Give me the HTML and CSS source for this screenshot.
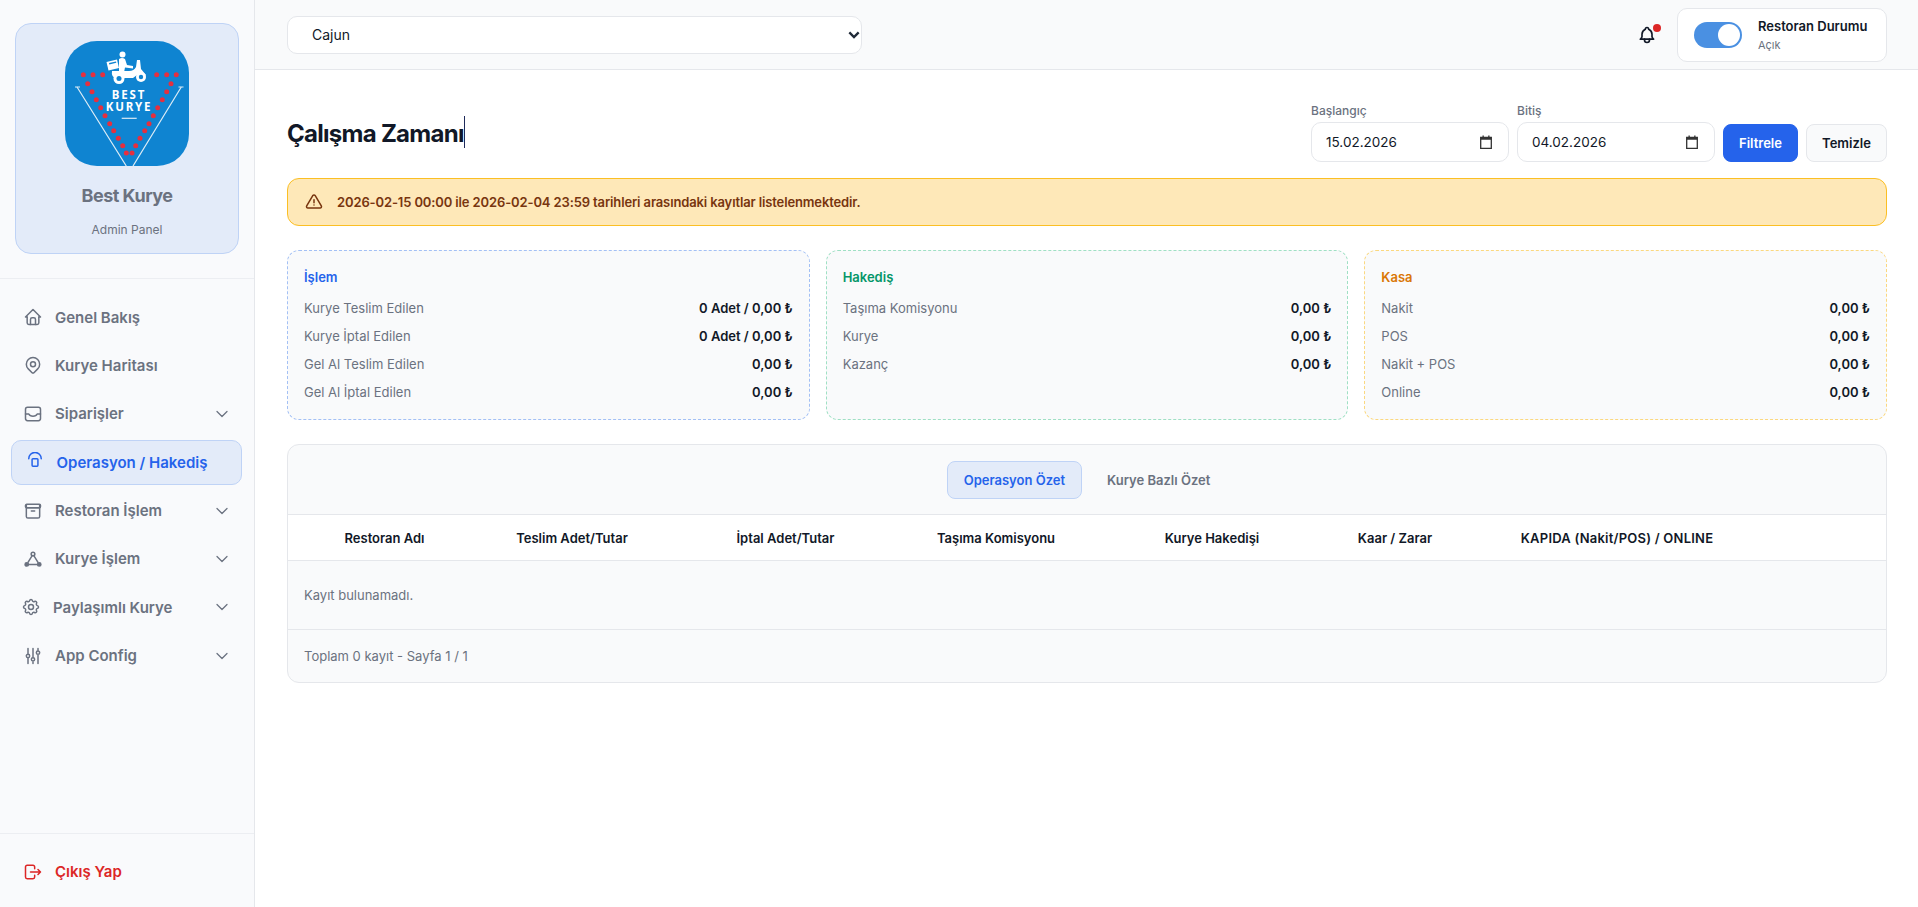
FILE: index.html
```html
<!DOCTYPE html>
<html lang="tr">

<head>
    <meta charset="UTF-8">
    <title>Best Kurye</title>
    <link rel="stylesheet" href="styles.css">
</head>

<body>
    <aside class="sidebar">
        <div class="brand-wrap">
            <div class="brand">
                <svg class="logo" viewBox="0 0 124 125">
                    <rect width="124" height="125" rx="32" fill="#0f84d1" />
                    <g fill="none" stroke="#dcecf6" stroke-width="1.2">
                        <path d="M12 46L61.3 125M116.3 46L68 125" />
                        <path d="M10 46h5M113.500 46h5" />
                    </g>
                    <g fill="#e5303f">
                        <circle cx="18.300" cy="33.700" r="2.500" />
                        <circle cx="28" cy="33.700" r="2.500" />
                        <circle cx="37.700" cy="33.700" r="2.500" />
                        <circle cx="91.700" cy="33.700" r="2.500" />
                        <circle cx="101.700" cy="33.700" r="2.500" />
                        <circle cx="111.300" cy="33.700" r="2.500" />
                        <circle cx="22.700" cy="42.700" r="2.500" />
                        <circle cx="27" cy="50.700" r="2.500" />
                        <circle cx="31.300" cy="58.700" r="2.500" />
                        <circle cx="35.700" cy="66.700" r="2.500" />
                        <circle cx="40" cy="74.700" r="2.500" />
                        <circle cx="44.700" cy="82.700" r="2.500" />
                        <circle cx="48.700" cy="89.700" r="2.500" />
                        <circle cx="53.300" cy="97.300" r="2.500" />
                        <circle cx="57.700" cy="104.700" r="2.500" />
                        <circle cx="61.300" cy="112" r="2.500" />
                        <circle cx="67" cy="112" r="2.500" />
                        <circle cx="70.700" cy="104.700" r="2.500" />
                        <circle cx="75" cy="97.300" r="2.500" />
                        <circle cx="79.700" cy="89.700" r="2.500" />
                        <circle cx="84" cy="82.700" r="2.500" />
                        <circle cx="88.300" cy="74.700" r="2.500" />
                        <circle cx="92.700" cy="66.700" r="2.500" />
                        <circle cx="97.300" cy="58.700" r="2.500" />
                        <circle cx="101.700" cy="50.700" r="2.500" />
                        <circle cx="106" cy="42.700" r="2.500" />
                    </g>
                    <g fill="#fff">
                        <circle cx="57.500" cy="13.500" r="3" />
                        <path d="M54 18q3-2 6 0l2 6 6 1v2.500l-8-1-1 5h-5z" />
                        <path d="M47 30h17q5 0 7-4l1-7h3l1 9 5 6-2 1.500-5-3-6 4.500h-17q-5-1-4-7z" />
                        <path d="M41.500 21l10.500-2.500 2 8.500-10.500 2.500z" />
                        <circle cx="54" cy="37.500" r="5.500" />
                        <circle cx="76" cy="36" r="5" />
                    </g>
                    <g fill="#0f84d1">
                        <path d="M44 22l7-1.600 .3 1.400-7 1.600z" />
                        <circle cx="54" cy="37.500" r="2.500" />
                        <circle cx="76" cy="36" r="2.200" />
                    </g>
                    <text x="64" y="58" class="logo-text">BEST</text>
                    <text x="64" y="70.300" class="logo-text">KURYE</text>
                    <path d="M56.700 77.300h15" stroke="#dcecf6" stroke-width="1.200" />
                </svg>
                <div class="brand-name">Best Kurye</div>
                <div class="brand-sub">Admin Panel</div>
            </div>
        </div>

        <nav class="nav">
            <a class="nav-item">
                <svg class="icon" viewBox="0 0 24 24"><path d="M5 12H3l9-9 9 9h-2" /><path d="M5 12v7a2 2 0 0 0 2 2h10a2 2 0 0 0 2-2v-7" /><path d="M9 21v-6a2 2 0 0 1 2-2h2a2 2 0 0 1 2 2v6" /></svg>
                <span>Genel Bakış</span>
            </a>
            <a class="nav-item">
                <svg class="icon" viewBox="0 0 24 24"><path d="M9 11a3 3 0 1 0 6 0a3 3 0 0 0-6 0" /><path d="M17.657 16.657l-4.243 4.243a2 2 0 0 1-2.827 0l-4.244-4.243a8 8 0 1 1 11.314 0z" /></svg>
                <span>Kurye Haritası</span>
            </a>
            <a class="nav-item">
                <svg class="icon" viewBox="0 0 24 24"><rect x="3" y="4" width="18" height="16" rx="2.500" /><path d="M3 12h4c1.500 3.500 8.500 3.500 10 0h4" /></svg>
                <span>Siparişler</span>
                <svg class="chevron" viewBox="0 0 24 24"><path d="M6 9l6 6 6-6" /></svg>
            </a>
            <a class="nav-item active">
                <svg class="icon" viewBox="0 0 24 24"><path d="M4.500 8a7.500 7.500 0 0 1 15 0" /><rect x="8.500" y="8" width="7" height="9" rx="1" /></svg>
                <span>Operasyon / Hakediş</span>
            </a>
            <a class="nav-item">
                <svg class="icon" viewBox="0 0 24 24"><rect x="3" y="4" width="18" height="4" rx="1.500" /><path d="M4 4.500v14a2 2 0 0 0 2 2h12a2 2 0 0 0 2-2v-14" /><path d="M4 8h16M10 12h4" /></svg>
                <span>Restoran İşlem</span>
                <svg class="chevron" viewBox="0 0 24 24"><path d="M6 9l6 6 6-6" /></svg>
            </a>
            <a class="nav-item">
                <svg class="icon" viewBox="0 0 24 24"><circle cx="12" cy="6" r="2.200" /><circle cx="4.500" cy="18.500" r="2" fill="currentColor" /><circle cx="19.500" cy="18.500" r="2" fill="currentColor" /><path d="M6.500 18.500h11M6 16l5-8M18 16l-5-8" /></svg>
                <span>Kurye İşlem</span>
                <svg class="chevron" viewBox="0 0 24 24"><path d="M6 9l6 6 6-6" /></svg>
            </a>
            <a class="nav-item shared">
                <svg class="icon" viewBox="0 0 24 24"><path d="M10.325 4.317c.426-1.756 2.924-1.756 3.350 0a1.724 1.724 0 0 0 2.573 1.066c1.543-.94 3.310 .826 2.370 2.370a1.724 1.724 0 0 0 1.065 2.572c1.756 .426 1.756 2.924 0 3.350a1.724 1.724 0 0 0-1.066 2.573c.94 1.543-.826 3.310-2.370 2.370a1.724 1.724 0 0 0-2.572 1.065c-.426 1.756-2.924 1.756-3.350 0a1.724 1.724 0 0 0-2.573-1.066c-1.543 .94-3.310-.826-2.370-2.370a1.724 1.724 0 0 0-1.065-2.572c-1.756-.426-1.756-2.924 0-3.350a1.724 1.724 0 0 0 1.066-2.573c-.94-1.543 .826-3.310 2.370-2.370c1 .608 2.296 .07 2.572-1.065z" /><circle cx="12" cy="12" r="3" /></svg>
                <span>Paylaşımlı Kurye</span>
                <svg class="chevron" viewBox="0 0 24 24"><path d="M6 9l6 6 6-6" /></svg>
            </a>
            <a class="nav-item">
                <svg class="icon" viewBox="0 0 24 24"><path d="M4 12a2 2 0 1 0 4 0a2 2 0 0 0-4 0M6 3v7M6 14v7M10 16a2 2 0 1 0 4 0a2 2 0 0 0-4 0M12 3v11M12 18v3M16 8a2 2 0 1 0 4 0a2 2 0 0 0-4 0M18 3v3M18 10v11" /></svg>
                <span>App Config</span>
                <svg class="chevron" viewBox="0 0 24 24"><path d="M6 9l6 6 6-6" /></svg>
            </a>
        </nav>

        <div class="sidebar-foot">
            <a class="nav-item logout">
                <svg class="icon" viewBox="0 0 24 24"><path d="M14 8V6a2 2 0 0 0-2-2H5a2 2 0 0 0-2 2v12a2 2 0 0 0 2 2h7a2 2 0 0 0 2-2v-2" /><path d="M9 12h12l-3-3M18 15l3-3" /></svg>
                <span>Çıkış Yap</span>
            </a>
        </div>
    </aside>

    <div class="page">
        <header class="topbar">
            <div class="select-wrap">
                <select class="select">
                    <option>Cajun</option>
                </select>
                <svg class="select-arrow" viewBox="0 0 24 24"><path d="M5 8l7 7 7-7" /></svg>
            </div>
            <div class="topbar-right">
                <div class="bell">
                    <svg viewBox="0 0 24 24"><path d="M10 5a2 2 0 1 1 4 0a7 7 0 0 1 4 6v3a4 4 0 0 0 2 3H4a4 4 0 0 0 2-3v-3a7 7 0 0 1 4-6" /><path d="M9 17v1a3 3 0 0 0 6 0v-1" /></svg>
                    <i class="bell-dot"></i>
                </div>
                <div class="status">
                    <div class="toggle"><i class="knob"></i></div>
                    <div>
                        <div class="status-name">Restoran Durumu</div>
                        <div class="status-val">Açık</div>
                    </div>
                </div>
            </div>
        </header>

        <main class="main">
            <div class="head">
                <h1 class="title"><span class="title-text">Çalışma Zamanı</span><span class="caret"></span></h1>
                <div class="filters">
                    <div class="field">
                        <label class="field-label">Başlangıç</label>
                        <div class="date-input">
                            <span>15.02.2026</span>
                            <svg viewBox="0 0 12 14"><path d="M0.700 2.500h10.600v10.800H0.700z" fill="none" stroke="currentColor" stroke-width="1.300" /><path d="M0.700 2h10.600v2.800H0.700zM2.500 0.500h1.300v2H2.500zM8.200 0.500h1.300v2H8.200z" fill="currentColor" /></svg>
                        </div>
                    </div>
                    <div class="field">
                        <label class="field-label">Bitiş</label>
                        <div class="date-input">
                            <span>04.02.2026</span>
                            <svg viewBox="0 0 12 14"><path d="M0.700 2.500h10.600v10.800H0.700z" fill="none" stroke="currentColor" stroke-width="1.300" /><path d="M0.700 2h10.600v2.800H0.700zM2.500 0.500h1.300v2H2.500zM8.200 0.500h1.300v2H8.200z" fill="currentColor" /></svg>
                        </div>
                    </div>
                    <button class="btn btn-primary">Filtrele</button>
                    <button class="btn">Temizle</button>
                </div>
            </div>

            <div class="alert">
                <svg viewBox="0 0 24 24"><path d="M12 9v4" /><path d="M10.363 3.591l-8.106 13.534a1.914 1.914 0 0 0 1.636 2.871h16.214a1.914 1.914 0 0 0 1.636-2.870l-8.106-13.536a1.914 1.914 0 0 0-3.274 0z" /><path d="M12 16h.01" /></svg>
                <span>2026-02-15 00:00 ile 2026-02-04 23:59 tarihleri arasındaki kayıtlar listelenmektedir.</span>
            </div>

            <div class="cards">
                <section class="card card-blue">
                    <h3 class="card-title">İşlem</h3>
                    <div class="row"><span>Kurye Teslim Edilen</span><b>0 Adet / 0,00 ₺</b></div>
                    <div class="row"><span>Kurye İptal Edilen</span><b>0 Adet / 0,00 ₺</b></div>
                    <div class="row"><span>Gel Al Teslim Edilen</span><b>0,00 ₺</b></div>
                    <div class="row"><span>Gel Al İptal Edilen</span><b>0,00 ₺</b></div>
                </section>
                <section class="card card-green">
                    <h3 class="card-title">Hakediş</h3>
                    <div class="row"><span>Taşıma Komisyonu</span><b>0,00 ₺</b></div>
                    <div class="row"><span>Kurye</span><b>0,00 ₺</b></div>
                    <div class="row"><span>Kazanç</span><b>0,00 ₺</b></div>
                </section>
                <section class="card card-amber">
                    <h3 class="card-title">Kasa</h3>
                    <div class="row"><span>Nakit</span><b>0,00 ₺</b></div>
                    <div class="row"><span>POS</span><b>0,00 ₺</b></div>
                    <div class="row"><span>Nakit + POS</span><b>0,00 ₺</b></div>
                    <div class="row"><span>Online</span><b>0,00 ₺</b></div>
                </section>
            </div>

            <section class="panel">
                <div class="tabs">
                    <button class="tab tab-active">Operasyon Özet</button>
                    <button class="tab">Kurye Bazlı Özet</button>
                </div>
                <div class="thead">
                    <div>Restoran Adı</div>
                    <div>Teslim Adet/Tutar</div>
                    <div>İptal Adet/Tutar</div>
                    <div>Taşıma Komisyonu</div>
                    <div>Kurye Hakedişi</div>
                    <div>Kaar / Zarar</div>
                    <div class="th-wide">KAPIDA (Nakit/POS) / ONLINE</div>
                </div>
                <div class="empty">Kayıt bulunamadı.</div>
                <div class="panel-foot">Toplam 0 kayıt - Sayfa 1 / 1</div>
            </section>
        </main>
    </div>
</body>

</html>
```

FILE: styles.css
```css
* {
    box-sizing: border-box;
}

body {
    margin: 0;
    height: 907px;
    display: flex;
    overflow: hidden;
    background: #fff;
    color: #111827;
    font-family: Inter, "Noto Sans", sans-serif;
    font-size: 14px;
}

h1,
h3 {
    margin: 0;
}

/* sidebar */
.sidebar {
    width: 255px;
    flex: none;
    display: flex;
    flex-direction: column;
    background: #f9fafc;
    border-right: 1px solid #e5e7eb;
}

.brand-wrap {
    padding: 23px 15px;
    border-bottom: 1px solid #eceef2;
    height: 279px;
}

.brand {
    height: 231px;
    padding-top: 17px;
    display: flex;
    flex-direction: column;
    align-items: center;
    background: #e3ebf9;
    border: 1px solid #bfd3f6;
    border-radius: 16px;
}

.logo {
    width: 124px;
    height: 125px;
    display: block;
}

.logo-text {
    fill: #fff;
    font-family: "Noto Sans", sans-serif;
    font-size: 11.500px;
    font-weight: 700;
    letter-spacing: 1.800px;
    text-anchor: middle;
}

.brand-name {
    margin-top: 18px;
    font-size: 18px;
    line-height: 24px;
    font-weight: 700;
    letter-spacing: -0.500px;
    color: #6b7280;
}

.brand-sub {
    margin-top: 14px;
    font-size: 12px;
    line-height: 16px;
    color: #6b7280;
}

.nav {
    flex: 1;
    padding: 15.500px 12px 0 11px;
    display: flex;
    flex-direction: column;
    gap: 3.400px;
}

.nav-item {
    height: 45px;
    padding: 0 9px 0 11px;
    display: flex;
    align-items: center;
    gap: 12px;
    font-size: 15px;
    font-weight: 600;
    color: #6b7280;
    border: 1px solid transparent;
    border-radius: 10px;
}

.nav-item.active {
    padding-left: 12.500px;
    color: #2563eb;
    background: #e3ebf9;
    border-color: #bfd3f6;
}

.nav-item.shared {
    padding-left: 9px;
}

.icon {
    width: 20px;
    height: 20px;
    flex: none;
    fill: none;
    stroke: currentColor;
    stroke-width: 1.800;
    stroke-linecap: round;
    stroke-linejoin: round;
}

.chevron {
    width: 20px;
    height: 20px;
    margin-left: auto;
    flex: none;
    fill: none;
    stroke: currentColor;
    stroke-width: 1.500;
    stroke-linecap: round;
    stroke-linejoin: round;
}

.sidebar-foot {
    height: 74px;
    padding: 15px 12px 0 11px;
    border-top: 1px solid #eceef2;
}

.nav-item.logout {
    color: #dc2626;
}

/* top bar */
.page {
    flex: 1;
    min-width: 0;
}

.topbar {
    height: 70px;
    padding: 0 31px 0 32px;
    display: flex;
    align-items: center;
    justify-content: space-between;
    background: #f9fafb;
    border-bottom: 1px solid #e5e7eb;
}

.select-wrap {
    position: relative;
    width: 575px;
    height: 38px;
}

.select {
    width: 100%;
    height: 100%;
    padding: 0 16px 0 24px;
    appearance: none;
    background: #fff;
    border: 1px solid #e5e7eb;
    border-radius: 10px;
    font-family: inherit;
    font-size: 14px;
    color: #111827;
}

.select-arrow {
    position: absolute;
    right: 0;
    top: 11px;
    width: 16px;
    height: 16px;
    fill: none;
    stroke: #1f2937;
    stroke-width: 3.500;
}

.topbar-right {
    display: flex;
    align-items: center;
    gap: 14px;
}

.bell {
    position: relative;
    width: 32px;
    height: 32px;
    display: flex;
    align-items: center;
    justify-content: center;
}

.bell svg {
    width: 20px;
    height: 20px;
    fill: none;
    stroke: #111827;
    stroke-width: 2;
    stroke-linecap: round;
    stroke-linejoin: round;
}

.bell-dot {
    position: absolute;
    top: 5px;
    right: 2px;
    width: 8px;
    height: 8px;
    border-radius: 50%;
    background: #dc2626;
}

.status {
    width: 210px;
    height: 54px;
    padding: 0 16px;
    display: flex;
    align-items: center;
    gap: 16px;
    background: #fff;
    border: 1px solid #e5e7eb;
    border-radius: 10px;
}

.toggle {
    width: 48px;
    height: 26px;
    flex: none;
    padding: 2px;
    display: flex;
    justify-content: flex-end;
    background: #4a90e2;
    border-radius: 13px;
}

.knob {
    width: 22px;
    height: 22px;
    border-radius: 50%;
    background: #fff;
}

.status-name {
    font-size: 13px;
    line-height: 18px;
    font-weight: 600;
    white-space: nowrap;
}

.status-val {
    margin-top: 2px;
    font-size: 11px;
    line-height: 16px;
    color: #6b7280;
}

/* main */
.main {
    padding: 32px 31px 0 32px;
}

.head {
    display: flex;
    align-items: center;
    justify-content: space-between;
}

.title {
    font-size: 24px;
    font-weight: 700;
    letter-spacing: -0.720px;
    display: flex;
    align-items: center;
}

.title-text {
    margin-top: 4px;
    line-height: 28px;
}

.caret {
    width: 1px;
    height: 32px;
    background: #1e2a5a;
}

.filters {
    display: flex;
    align-items: flex-end;
    gap: 8px;
}

.field-label {
    display: block;
    margin-bottom: 2px;
    font-size: 12px;
    line-height: 18px;
    font-weight: 500;
    color: #6b7280;
}

.date-input {
    width: 198px;
    height: 40px;
    padding: 0 16px 0 14px;
    display: flex;
    align-items: center;
    justify-content: space-between;
    background: #fff;
    border: 1px solid #e5e7eb;
    border-radius: 10px;
    font-size: 13.500px;
}

.date-input svg {
    width: 12px;
    height: 14px;
    color: #333;
}

.btn {
    height: 38px;
    width: 75px;
    padding: 0;
    background: #f9fafb;
    border: 1px solid #e5e7eb;
    border-radius: 8px;
    font-family: inherit;
    font-size: 13px;
    font-weight: 600;
    color: #111827;
}

.btn + .btn {
    width: 81px;
}

.btn-primary {
    color: #fff;
    background: #2563eb;
    border-color: #2563eb;
}

.alert {
    height: 48px;
    margin-top: 16px;
    padding: 0 17px;
    display: flex;
    align-items: center;
    gap: 14px;
    font-size: 13px;
    font-weight: 600;
    letter-spacing: -0.130px;
    color: #78350f;
    background: #fee8b8;
    border: 1px solid #fbbf24;
    border-radius: 12px;
}

.alert svg {
    width: 18px;
    height: 18px;
    flex: none;
    fill: none;
    stroke: currentColor;
    stroke-width: 2;
    stroke-linecap: round;
    stroke-linejoin: round;
}

.cards {
    margin-top: 24px;
    display: grid;
    grid-template-columns: repeat(3, 1fr);
    gap: 16px;
}

.card {
    height: 170px;
    padding: 15px 16px;
    background: #f9fafb;
    border: 1px dashed;
    border-radius: 12px;
}

.card-blue {
    border-color: #a3c0f5;
}

.card-green {
    border-color: #9fe0c4;
}

.card-amber {
    border-color: #fbd87f;
}

.card-title {
    margin-bottom: 6px;
    font-size: 13px;
    line-height: 22px;
    font-weight: 600;
}

.card-blue .card-title {
    color: #2563eb;
}

.card-green .card-title {
    color: #059669;
}

.card-amber .card-title {
    color: #d97706;
}

.row {
    height: 28px;
    display: flex;
    align-items: center;
    justify-content: space-between;
    font-size: 13px;
    color: #6b7280;
}

.row b {
    font-weight: 600;
    color: #111827;
}

/* table panel */
.panel {
    margin-top: 24px;
    height: 239px;
    overflow: hidden;
    background: #f9fafb;
    border: 1px solid #e5e7eb;
    border-radius: 12px;
}

.tabs {
    height: 70px;
    display: flex;
    align-items: center;
    justify-content: center;
    gap: 8px;
    border-bottom: 1px solid #e5e7eb;
}

.tab {
    height: 38px;
    padding: 0 16px;
    background: none;
    border: 1px solid transparent;
    border-radius: 8px;
    font-family: inherit;
    font-size: 13px;
    font-weight: 600;
    color: #6b7280;
}

.tab-active {
    color: #2563eb;
    background: #e3ebf9;
    border-color: #bfd3f6;
}

.thead {
    height: 46px;
    display: grid;
    grid-template-columns: 193px 182px 245px 176px 256px 110px 334px;
    align-items: center;
    text-align: center;
    font-size: 13px;
    font-weight: 600;
    background: #fff;
    border-bottom: 1px solid #e5e7eb;
}

.th-wide {
    letter-spacing: 0.220px;
}

.empty {
    height: 69px;
    padding: 0 16px;
    display: flex;
    align-items: center;
    font-size: 13px;
    color: #6b7280;
    border-bottom: 1px solid #e5e7eb;
}

.panel-foot {
    padding: 0 16px;
    height: 52px;
    display: flex;
    align-items: center;
    font-size: 13px;
    color: #6b7280;
}
```
